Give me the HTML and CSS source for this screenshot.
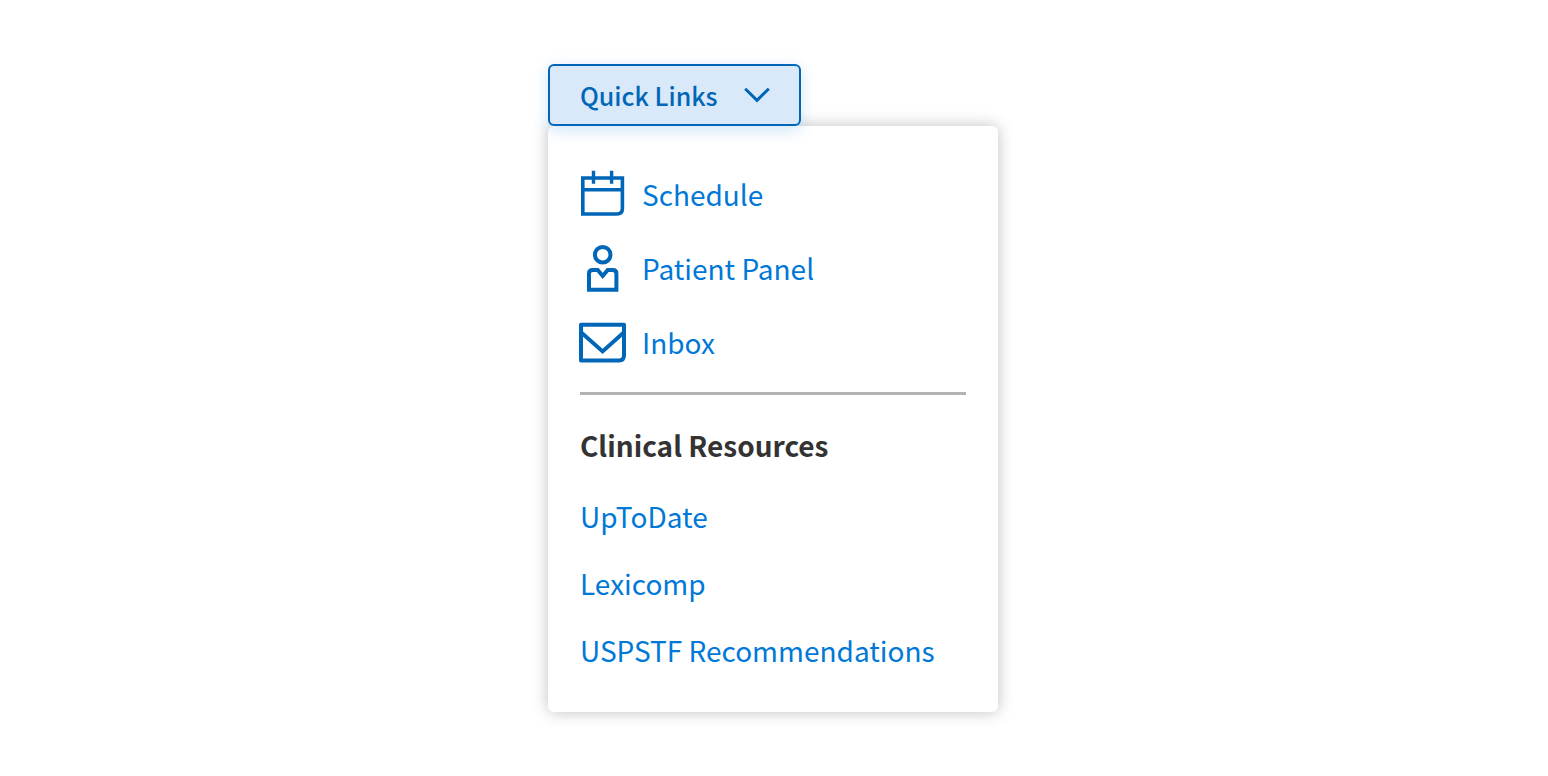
FILE: index.html
```html
<!DOCTYPE html>
<html lang="en">
<head>
  <meta charset="UTF-8" />
  <meta name="viewport" content="width=device-width, initial-scale=1.0" />
  <title>Quick Links</title>
  <link rel="stylesheet" href="styles.css">
</head>
<body>
  <div class="dropdown">
    <button type="button" class="dropdown-toggle" aria-expanded="true" aria-controls="quickLinks">
      Quick Links
      <svg class="chevron" viewBox="0 0 26 16" aria-hidden="true">
        <path d="M1.2 1.7 L13 13.4 L24.8 1.7" />
      </svg>
    </button>

    <nav class="menu" id="quickLinks">
      <!-- Main links -->
      <ul class="main-links">
        <li>
          <a href="#schedule">
            <svg class="icon" viewBox="0 0 48 48" aria-hidden="true">
              <path d="M2.8 8 H42.4 V38.5 Q42.4 44 37 44 H2.8 Z M2.8 19.7 H42.4" stroke-width="3.6" />
              <path d="M13.5 0.7 V13.7 M31.6 0.7 V13.7" stroke-width="3.4" />
            </svg>
            Schedule
          </a>
        </li>
        <li>
          <a href="#patients">
            <svg class="icon" viewBox="0 0 48 48" aria-hidden="true">
              <circle cx="22.7" cy="10.7" r="7.8" stroke-width="4" />
              <path d="M9 45.8 V29.5 Q9 26 12.5 26 H17.7 L22.7 32 L27.7 26 H32.7 Q36.4 26 36.4 29.5 V45.8 Z" stroke-width="4" />
            </svg>
            Patient Panel
          </a>
        </li>
        <li>
          <a href="#inbox">
            <svg class="icon" viewBox="0 0 48 48" aria-hidden="true">
              <path d="M1 6.8 H44 V37.2 Q44 42.4 39 42.4 H1 Z" stroke-width="4" stroke-linejoin="round" />
              <path d="M1 14.2 L22.6 33.4 L44 14.2" stroke-width="4" />
            </svg>
            Inbox
          </a>
        </li>
      </ul>

      <hr>

      <!-- Clinical resources -->
      <h2>Clinical Resources</h2>
      <ul class="resources">
        <li><a href="#uptodate">UpToDate</a></li>
        <li><a href="#lexicomp">Lexicomp</a></li>
        <li><a href="#uspstf">USPSTF Recommendations</a></li>
      </ul>
    </nav>
  </div>
</body>
</html>
```

FILE: styles.css
```css
* {
  box-sizing: border-box;
}
body {
  margin: 0;
  padding: 64px 16px 64px 14px;
  background: #fff;
  font-family: "Source Sans Pro", "Noto Sans CJK SC", sans-serif;
  font-size: 28px;
  line-height: 42px;
}
ul {
  list-style: none;
  margin: 0;
  padding: 0;
}
.dropdown {
  max-width: 450px;
  margin: 0 auto;
}
/* Toggle button */
.dropdown-toggle {
  position: relative;
  z-index: 1;
  display: flex;
  align-items: center;
  gap: 26px;
  padding: 10px 29px 10px 30px;
  border: 2px solid #0066b8;
  border-radius: 6px;
  background: #d9e9f9;
  color: #0066b8;
  font-family: inherit;
  font-size: 25px;
  font-weight: 500;
  line-height: 38px;
  box-shadow: 0 4px 16px rgba(0, 120, 215, 0.2);
  cursor: pointer;
}
.chevron {
  width: 26px;
  height: 16px;
  fill: none;
  stroke: #0066b8;
  stroke-width: 3;
}
/* Menu */
.menu {
  padding: 44px 32px 41px;
  border-radius: 6px;
  background: #fff;
  box-shadow: 0 0 16px rgba(0, 0, 0, 0.25);
}
.menu a {
  display: flex;
  align-items: center;
  gap: 14px;
  color: #0078d7;
  text-decoration: none;
}
.menu a:hover {
  text-decoration: underline;
}
.icon {
  flex: none;
  overflow: visible;
  width: 48px;
  height: 48px;
  fill: none;
  stroke: #0066b8;
}
.main-links {
  display: grid;
  gap: 26px;
}
.menu hr {
  margin: 26px 0 29px;
  border: 0;
  border-top: 3px solid #b3b3b3;
}
.menu h2 {
  margin: 0 0 29px;
  color: #333;
  font-size: 28px;
  font-weight: 700;
}
.resources {
  display: grid;
  gap: 25px;
}
```
